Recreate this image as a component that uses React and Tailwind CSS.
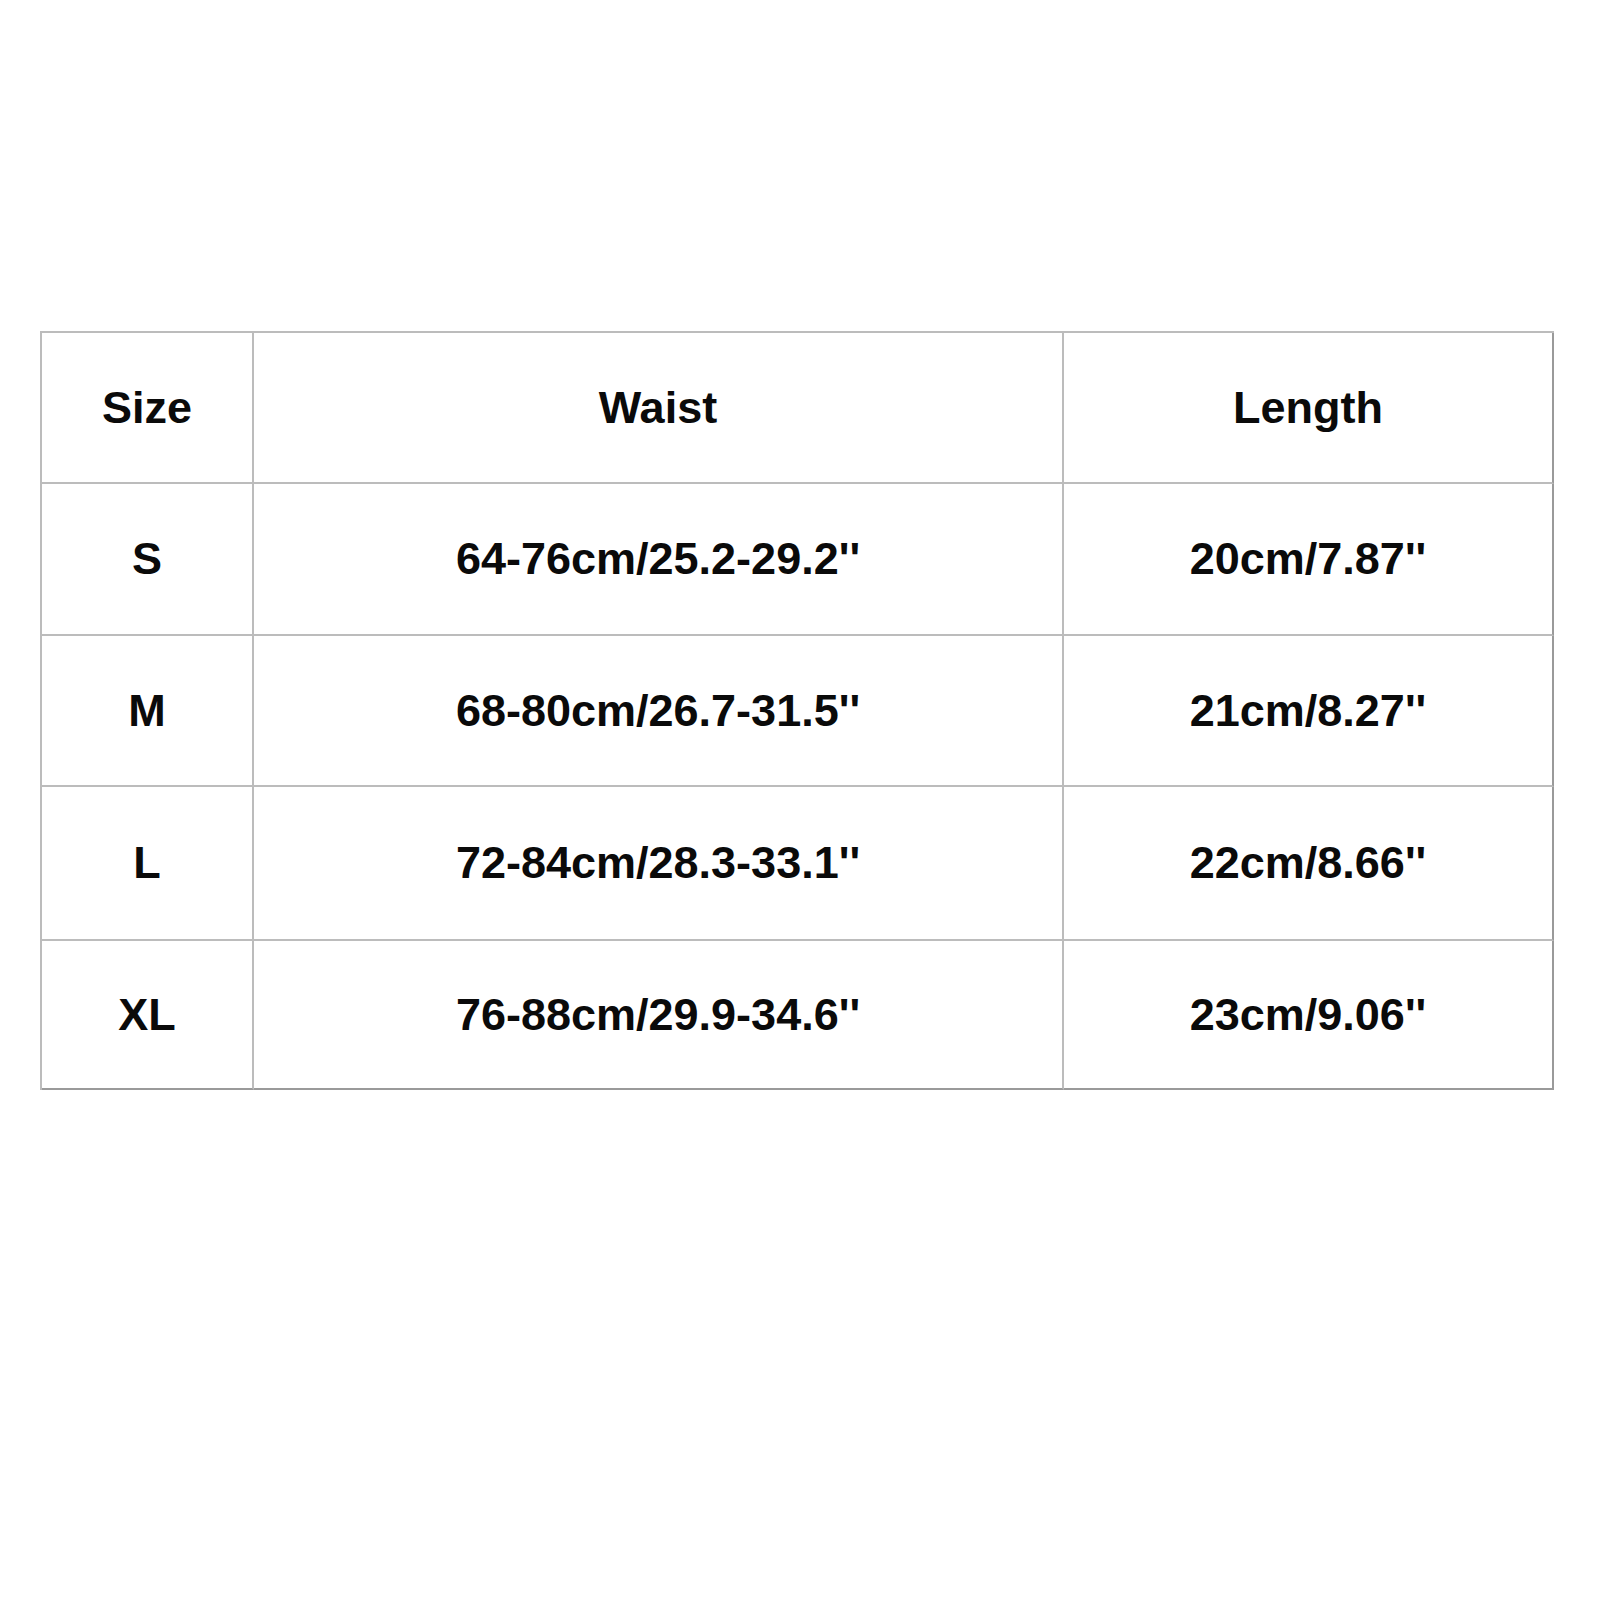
import React from 'react';

const rows = [
  { size: 'Size', waist: 'Waist', length: 'Length' },
  { size: 'S', waist: '64-76cm/25.2-29.2\'\'', length: '20cm/7.87\'\'' },
  { size: 'M', waist: '68-80cm/26.7-31.5\'\'', length: '21cm/8.27\'\'' },
  { size: 'L', waist: '72-84cm/28.3-33.1\'\'', length: '22cm/8.66\'\'' },
  { size: 'XL', waist: '76-88cm/29.9-34.6\'\'', length: '23cm/9.06\'\'' },
];

const Cell = ({ children, last, lastCol }) => (
  <div
    className={`flex items-center justify-center text-[45px] font-bold text-[#0a0a0a] ${
      lastCol ? 'border-r-2 border-r-[#9a9a9a]' : 'border-r-2 border-r-[#bcbcbc]'
    } ${last ? 'border-b-2 border-b-[#9a9a9a]' : 'border-b-2 border-b-[#bcbcbc]'}`}
  >
    {children}
  </div>
);

export default function App() {
  return (
    <div
      className="w-[1600px] h-[1600px] bg-white pt-[331px] pl-[40px]"
      style={{ fontFamily: '"Liberation Sans", Arial, sans-serif' }}
    >
      <div className="grid w-[1514px] grid-cols-[212px_810px_490px] grid-rows-[151px_152px_151px_154px_149px] border-l-2 border-t-2 border-[#bcbcbc]">
        {rows.map((r, i) => {
          const last = i === rows.length - 1;
          return (
            <React.Fragment key={r.size}>
              <Cell last={last}>{r.size}</Cell>
              <Cell last={last}>{r.waist}</Cell>
              <Cell last={last} lastCol>
                {r.length}
              </Cell>
            </React.Fragment>
          );
        })}
      </div>
    </div>
  );
}
